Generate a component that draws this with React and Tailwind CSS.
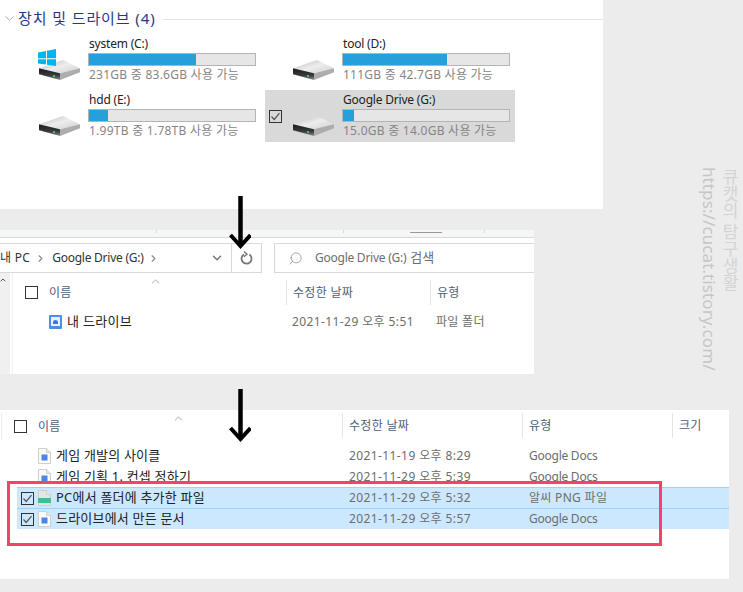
import React from "react";
import { ChevronDown, ChevronRight, ChevronUp, Search } from "lucide-react";

const drives = [
  { name: "system (C:)", free: "231GB 중 83.6GB 사용 가능", used: 107, win: true },
  { name: "tool (D:)", free: "111GB 중 42.7GB 사용 가능", used: 104 },
  { name: "hdd (E:)", free: "1.99TB 중 1.78TB 사용 가능", used: 19 },
  { name: "Google Drive (G:)", free: "15.0GB 중 14.0GB 사용 가능", used: 11, selected: true },
];

function CheckBox({ checked }) {
  return (
    <div className="w-[13px] h-[13px] shrink-0 border border-[#333] flex items-center justify-center">
      {checked && (
        <svg width="11" height="11" viewBox="0 0 11 11" fill="none">
          <path d="M1.5 5.5 L4.2 8.5 L9.5 2.2" stroke="#555" strokeWidth="1.2" />
        </svg>
      )}
    </div>
  );
}

function DriveIcon({ win }) {
  return (
    <svg width="44" height="33" viewBox="0 0 44 33" className="shrink-0 overflow-visible">
      <defs>
        <linearGradient id="driveTop" x1="0" y1="0" x2="1" y2="1">
          <stop offset="0" stopColor="#b9b9b9" />
          <stop offset="0.5" stopColor="#ededed" />
          <stop offset="1" stopColor="#cfcfcf" />
        </linearGradient>
        <linearGradient id="driveFront" x1="0" y1="0" x2="0" y2="1">
          <stop offset="0" stopColor="#1c1c1c" />
          <stop offset="0.6" stopColor="#3a3a3a" />
          <stop offset="1" stopColor="#8d8d8d" />
        </linearGradient>
      </defs>
      <polygon points="0,20.3 24,12 41,20.3 21,25.3" fill="url(#driveTop)" />
      <polygon points="0,20.3 21,25.3 21,32 0,26.3" fill="url(#driveFront)" />
      <polygon points="21,25.3 41,20.3 41,24.3 21,32" fill="#adadad" />
      <rect x="14" y="27" width="2" height="2" fill="#35c46a" />
      {win && (
        <g fill="#00b4f1" transform="translate(-1 1)">
          <polygon points="0,3.4 8,2 8,9.2 0,9.2" />
          <polygon points="9,1.8 18,0 18,9.2 9,9.2" />
          <polygon points="0,10.2 8,10.2 8,15.6 0,14.6" />
          <polygon points="9,10.2 18,10.2 18,17 9,15.8" />
        </g>
      )}
    </svg>
  );
}

function DriveTile({ drive }) {
  return (
    <div className={`h-[52px] flex items-start pl-[4px] ${drive.selected ? "bg-[#d9d9d9]" : ""}`}>
      <div className="w-[13px] h-full flex items-center shrink-0">{drive.selected && <CheckBox checked />}</div>
      <div className="ml-[11px] mt-[14px] w-[49px] shrink-0">
        <DriveIcon win={drive.win} />
      </div>
      <div className="flex flex-col pt-[2px]">
        <div className="h-[17px] pl-[1px] text-[12px] leading-[16px] text-[#222] tracking-[-0.2px]">{drive.name}</div>
        <div className="w-[168px] h-[13px] border border-[#b4b4b4] bg-[#e6e6e6] flex">
          <div className="h-full bg-[#26a0da]" style={{ width: drive.used }} />
        </div>
        <div className="h-[17px] pl-[1px] text-[12px] leading-[17px] text-[#858585] tracking-[0.25px] whitespace-nowrap">{drive.free}</div>
      </div>
    </div>
  );
}

function DocIcon({ png }) {
  return (
    <svg width="13" height="16" viewBox="0 0 13 16" className="shrink-0">
      <path d="M0.5 0.5 H8.5 L12.5 4.5 V15.5 H0.5 Z" fill={png ? "#e4e6e5" : "#fafafa"} stroke="#cfcfcf" />
      <path d="M8.5 0.5 V4.5 H12.5" fill="#e9e9e9" stroke="#cfcfcf" />
      {png ? (
        <rect x="0" y="8" width="13" height="5" fill="#3fbf93" />
      ) : (
        <rect x="3.5" y="6.5" width="6" height="6" fill="#4a86e8" />
      )}
    </svg>
  );
}

function DriveFolderIcon() {
  return (
    <svg width="13" height="14" viewBox="0 0 13 14" className="shrink-0">
      <rect x="0" y="0" width="13" height="14" rx="1" fill="#4a8fe7" />
      <rect x="2" y="2" width="9" height="9" fill="#e8f0fd" />
      <path d="M4 9 V7.4 A2.5 2.5 0 0 1 9 7.4 V9 Z" fill="#3b78d8" />
    </svg>
  );
}

function FileRow({ name, date, type, png, selected, className = "" }) {
  return (
    <div className={`flex items-center text-[12px] whitespace-nowrap ${selected ? "h-[21px] bg-[#cce8ff] border-t border-[#99d1ff] ml-[17px]" : "h-[21px]"} ${className}`}>
      {selected ? (
        <div className="ml-[4px] mr-[4px]">
          <CheckBox checked />
        </div>
      ) : (
        <div className="w-[38px] shrink-0" />
      )}
      <DocIcon png={png} />
      <div className="ml-[5px] text-[13px] tracking-[0.2px] text-[#222] w-[293px] shrink-0">{name}</div>
      <div className="text-[#6d6d6d] tracking-[0.4px] w-[180px] shrink-0">{date}</div>
      <div className={`text-[#6d6d6d] ${type === "Google Docs" ? "tracking-[-0.25px]" : "tracking-[0.3px]"}`}>{type}</div>
    </div>
  );
}

function HeaderLabel({ label, width }) {
  return (
    <div className="flex items-center h-[25px] border-l border-[#e5e5e5] pl-[6px] text-[12px] text-[#4c607a] tracking-[0.3px] shrink-0" style={{ width }}>
      {label}
    </div>
  );
}

function Arrow({ className }) {
  return (
    <svg width="22" height="54" viewBox="0 0 22 54" className={`absolute ${className}`}>
      <path d="M11.5 0 V50" stroke="#000" strokeWidth="4.5" fill="none" />
      <path d="M1.5 39 L11.5 50 L21.5 39" stroke="#000" strokeWidth="4" fill="none" />
    </svg>
  );
}

export default function App() {
  return (
    <div
      className="relative w-[743px] h-[592px] overflow-hidden bg-[#ececec]"
      style={{ fontFamily: '"Noto Sans", "Noto Sans CJK KR", sans-serif' }}
    >
      {/* drives */}
      <div className="w-[603px] h-[209px] bg-white pt-[7px]">
        <div className="flex items-center h-[22px] pl-[2px]">
          <ChevronDown size={15} strokeWidth={1} className="text-[#777]" />
          <div className="ml-[1px] text-[15px] text-[#1f3a8c] tracking-[0.9px] whitespace-nowrap">장치 및 드라이브 (4)</div>
          <div className="flex-1 h-[1px] mt-[2px] ml-[7px] bg-[#e5e5e5]" />
        </div>
        <div className="grid grid-cols-[250px_250px] gap-x-[4px] gap-y-[4px] ml-[11px] mt-[5px]">
          {drives.map((d) => (
            <DriveTile key={d.name} drive={d} />
          ))}
        </div>
      </div>

      {/* address bar window */}
      <div className="w-[534px] h-[144px] mt-[21px] bg-white flex flex-col">
        <div className="h-[8px] shrink-0 bg-[#f5f6f7] border-b border-[#d9d9d9] flex items-start">
          <div className="w-[1px] h-[3px] ml-[156px] bg-[#d9d9d9]" />
          <div className="w-[1px] h-[3px] ml-[186px] bg-[#d9d9d9]" />
          <div className="w-[32px] h-[1px] ml-[66px] mt-[2px] bg-[#999]" />
          <div className="w-[1px] h-[3px] ml-[42px] bg-[#d9d9d9]" />
        </div>
        <div className="flex h-[30px] mt-[5px] shrink-0">
          <div className="w-[262px] border border-l-0 border-[#d9d9d9] flex items-center text-[12px] text-[#333] whitespace-nowrap">
            <span className="tracking-[0.3px]">내 PC</span>
            <ChevronRight size={11} strokeWidth={2.5} className="ml-[5px] mr-[6px] text-[#888]" />
            <span className="tracking-[-0.25px]">Google Drive (G:)</span>
            <ChevronRight size={11} strokeWidth={2.5} className="mx-[4px] text-[#888]" />
            <ChevronDown size={14} strokeWidth={2.5} className="ml-auto mr-[7px] text-[#777]" />
            <div className="w-[30px] h-full border-l border-[#d9d9d9] flex items-center justify-center shrink-0">
              <svg width="13" height="14" viewBox="0 0 13 14" fill="none">
                <path d="M4 3.4 A5 5 0 1 0 9.4 3.6" stroke="#777" strokeWidth="1.8" />
                <path d="M4 0.6 L7 3.2 L4 5.8" stroke="#777" strokeWidth="1.4" />
              </svg>
            </div>
          </div>
          <div className="ml-[12px] flex-1 border border-r-0 border-[#d9d9d9] flex items-center pl-[13px] text-[12px] text-[#6d6d6d]">
            <Search size={15} strokeWidth={1} className="-scale-x-100 text-[#777]" />
            <span className="ml-[12px] tracking-[-0.25px]">Google Drive (G:)</span>
            <span className="ml-[4px] text-[13px]">검색</span>
          </div>
        </div>
        <div className="flex flex-1">
          <div className="w-[10px] bg-[#f0f0f0] border-r border-[#f0f0f0] pt-[3px]">
            <ChevronUp size={8} strokeWidth={3} className="text-[#555] -ml-[1px]" />
          </div>
          <div className="flex-1 ml-[2px] border-l border-[#f0f0f0] pt-[7px]">
            <div className="flex">
              <div className="relative w-[273px] flex items-center pl-[12px] shrink-0">
                <CheckBox />
                <span className="ml-[11px] text-[12px] text-[#4c607a] tracking-[0.3px]">이름</span>
                <ChevronUp size={13} strokeWidth={1} className="absolute left-[136px] -top-[5px] text-[#666]" />
              </div>
              <HeaderLabel label="수정한 날짜" width={144} />
              <HeaderLabel label="유형" width={100} />
            </div>
            <div className="flex items-center h-[20px] mt-[7px] text-[12px] whitespace-nowrap">
              <div className="ml-[36px]">
                <DriveFolderIcon />
              </div>
              <div className="ml-[5px] w-[225px] text-[13px] tracking-[0.3px] text-[#222] shrink-0">내 드라이브</div>
              <div className="w-[144px] text-[#6d6d6d] tracking-[0.4px] shrink-0">2021-11-29 오후 5:51</div>
              <div className="text-[#6d6d6d] tracking-[0.3px]">파일 폴더</div>
            </div>
          </div>
        </div>
      </div>

      {/* file list window */}
      <div className="w-[729px] h-[169px] mt-[36px] bg-white pl-0 pt-[3px]">
        <div className="flex h-[27px] border-l border-[#ededed] ml-[1px]">
          <div className="relative w-[340px] flex items-center pl-[12px] shrink-0">
            <CheckBox />
            <span className="ml-[11px] text-[12px] text-[#4c607a] tracking-[0.3px]">이름</span>
            <ChevronUp size={13} strokeWidth={1} className="absolute left-[170px] -top-[1px] text-[#666]" />
          </div>
          <HeaderLabel label="수정한 날짜" width={180} />
          <HeaderLabel label="유형" width={150} />
          <HeaderLabel label="크기" width={50} />
        </div>
        <div className="mt-[5px]">
          <FileRow name="게임 개발의 사이클" date="2021-11-19 오후 8:29" type="Google Docs" />
          <div className="h-[15px] overflow-hidden">
            <FileRow name="게임 기획 1. 컨셉 정하기" date="2021-11-29 오후 5:39" type="Google Docs" />
          </div>
          <FileRow className="mt-[6px]" selected png name="PC에서 폴더에 추가한 파일" date="2021-11-29 오후 5:32" type="알씨 PNG 파일" />
          <FileRow selected name="드라이브에서 만든 문서" date="2021-11-29 오후 5:57" type="Google Docs" />
        </div>
      </div>

      {/* annotations */}
      <div className="absolute left-[7px] top-[481px] w-[655px] h-[65px] border-[3px] border-[#f0446c]" />
      <Arrow className="left-[229px] top-[196px]" />
      <Arrow className="left-[229px] top-[389px]" />
      <div className="absolute left-[699px] top-[167px] [writing-mode:vertical-rl] text-[17px] leading-[20px] tracking-[0.1px] text-[#c6c6c6] whitespace-nowrap">https://cucat.tistory.com/</div>
      <div className="absolute left-[720px] top-[168px] [writing-mode:vertical-rl] text-[17px] leading-[18px] text-[#d4d4d4] whitespace-nowrap">큐캣의 탐구생활</div>
    </div>
  );
}
